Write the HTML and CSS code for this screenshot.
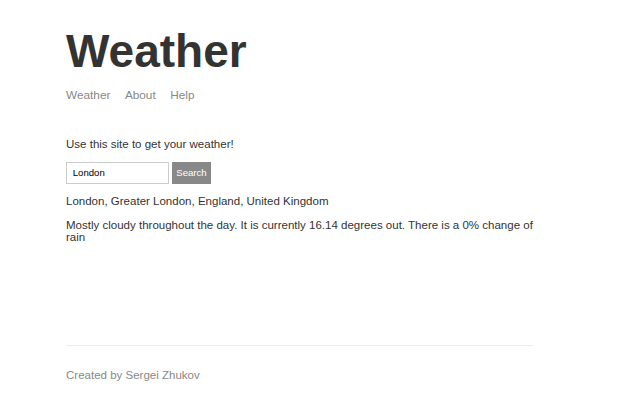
FILE: index.html
```html
<!DOCTYPE html>
<html lang="en">
<head>
<meta charset="utf-8">
<title>Weather</title>
<link rel="stylesheet" href="styles.css">
</head>
<body>
<div class="page">
  <header class="header">
    <h1 class="title">Weather</h1>
    <nav class="nav">
      <a class="nav-link" href="#">Weather</a>
      <a class="nav-link" href="#">About</a>
      <a class="nav-link" href="#">Help</a>
    </nav>
  </header>
  <main class="main-content">
    <p class="intro">Use this site to get your weather!</p>
    <form class="search">
      <input class="search-input" type="text" value="London" placeholder="Location">
      <button class="search-btn" type="button">Search</button>
    </form>
    <p class="msg">London, Greater London, England, United Kingdom</p>
    <p class="msg">Mostly cloudy throughout the day. It is currently 16.14 degrees out. There is a 0% change of rain</p>
  </main>
  <footer class="footer">
    <p class="credit">Created by Sergei Zhukov</p>
  </footer>
</div>
</body>
</html>
```

FILE: styles.css
```css
html, body {
  margin: 0;
  padding: 0;
  background: #ffffff;
}

body {
  color: #333333;
  font-family: "Liberation Sans", Arial, Helvetica, sans-serif;
  font-size: 11.52px;
}

.page {
  width: 467px;
  margin-left: 66px;
  display: flex;
  flex-direction: column;
  min-height: 404px;
}

.header {
  margin: 0 0 24.5px;
}

.title {
  font-size: 46px;
  font-weight: bold;
  margin: 25px 0 10.5px;
  line-height: 1.15;
}

.nav {
  display: flex;
  gap: 14.5px;
  font-size: 11.8px;
}

.nav-link {
  color: #888888;
  text-decoration: none;
}

.main-content {
  flex-grow: 1;
}

.intro,
.msg {
  margin: 11.5px 0;
}

.search {
  display: flex;
  gap: 3px;
  margin: 0;
}

.search-input {
  box-sizing: border-box;
  width: 103px;
  height: 22px;
  border: 1px solid #cccccc;
  padding: 0 5.76px;
  font-family: "Liberation Sans", Arial, Helvetica, sans-serif;
  font-size: 9.6px;
  color: #000000;
  outline: none;
}

.search-btn {
  box-sizing: border-box;
  width: 39px;
  height: 22px;
  border: 1px solid #888888;
  background: #888888;
  color: #ffffff;
  padding: 0;
  font-family: "Liberation Sans", Arial, Helvetica, sans-serif;
  font-size: 9.6px;
  cursor: pointer;
}

.footer {
  color: #888888;
  border-top: 1px solid #eeeeee;
  margin-top: 11.5px;
  padding: 11.5px 0;
}

.credit {
  margin: 11.5px 0;
}
```
